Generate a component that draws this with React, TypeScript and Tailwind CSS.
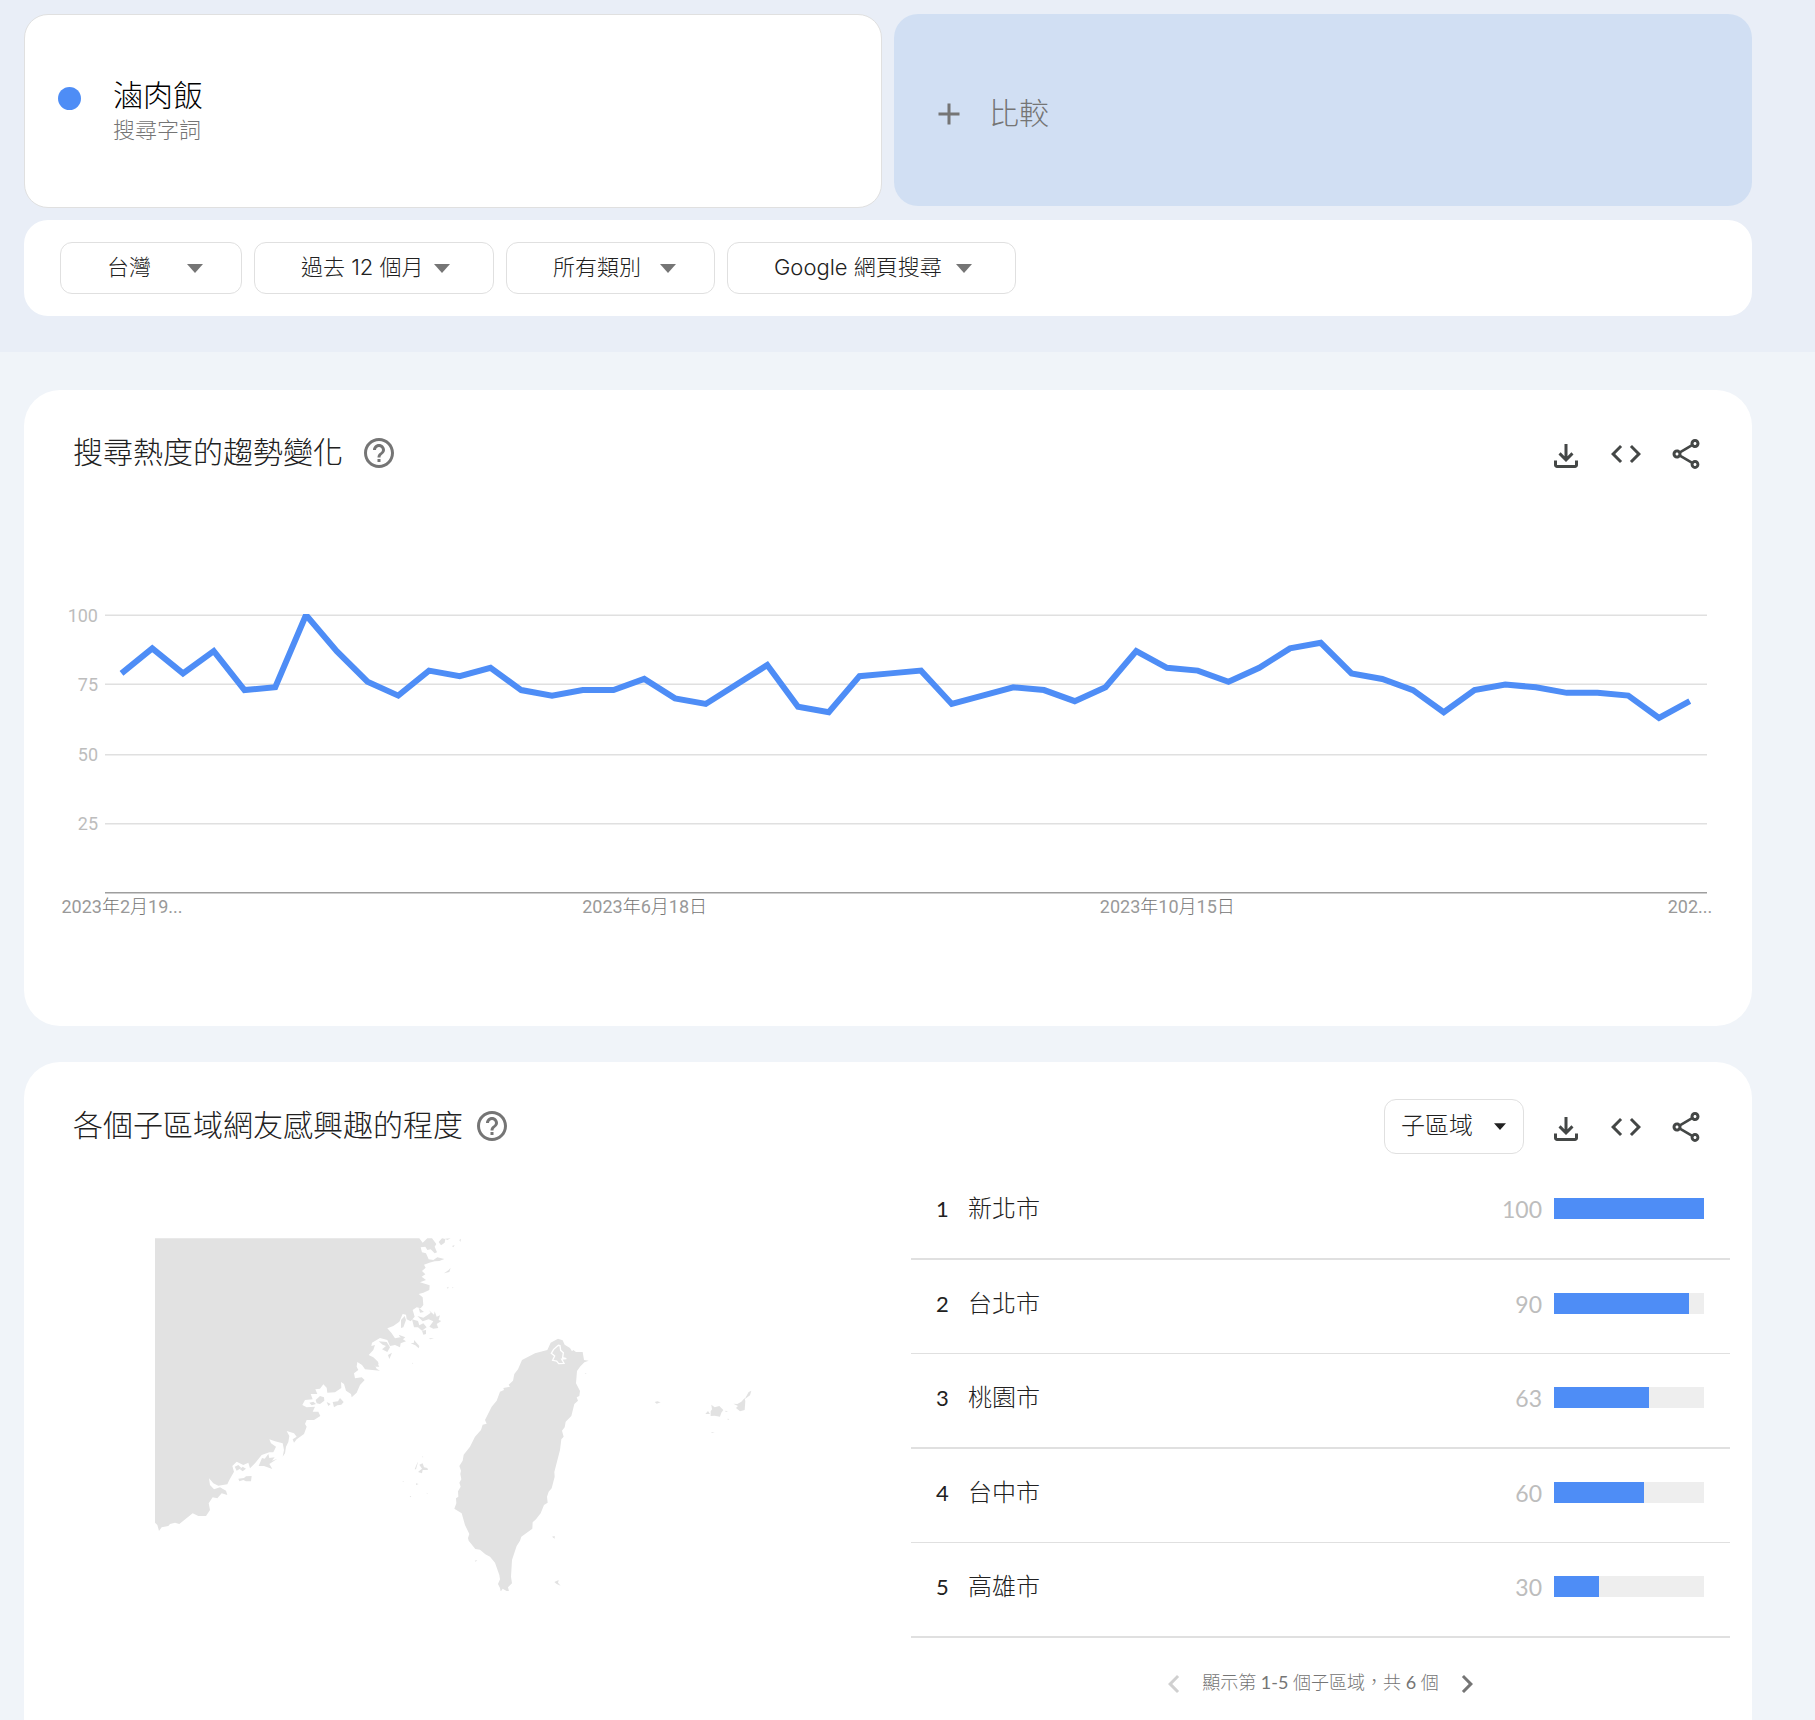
import type { ReactNode } from "react";
import { MdAdd, MdChevronLeft, MdChevronRight, MdCode, MdHelpOutline, MdOutlineShare } from "react-icons/md";

const VALUES = [
  79, 88, 79, 87, 73, 74, 100, 87, 76, 71, 80, 78, 81, 73, 71, 73, 73, 77, 70, 68, 75, 82, 67, 65, 78, 79, 80, 68, 71,
  74, 73, 69, 74, 87, 81, 80, 76, 81, 88, 90, 79, 77, 73, 65, 73, 75, 74, 72, 72, 71, 63, 69,
];

const REGIONS = [
  { name: "新北市", value: 100 },
  { name: "台北市", value: 90 },
  { name: "桃園市", value: 63 },
  { name: "台中市", value: 60 },
  { name: "高雄市", value: 30 },
];

const FILTERS = [
  { label: "地區", text: "台灣", size: "w-[182px]", caret: "right-[39px]" },
  { label: "時間範圍", text: "過去 12 個月", size: "w-[240px]", caret: "right-11" },
  { label: "類別", text: "所有類別", size: "w-[209px]", caret: "right-[39px]" },
  { label: "搜尋類型", text: "Google 網頁搜尋", size: "w-[289px]", caret: "right-11" },
];

function Caret({ className }: { className: string }) {
  return (
    <svg viewBox="0 0 16 9" className={className} fill="currentColor" aria-hidden="true">
      <path d="M0 0H16L8 9Z" />
    </svg>
  );
}

function DownloadIcon() {
  return (
    <svg viewBox="0 0 24 24" className="mt-1 size-9" fill="currentColor" aria-hidden="true">
      <path d="M12 16 7 11l1.4-1.45 2.6 2.6V4h2v8.15l2.6-2.6L17 11ZM6 20q-.825 0-1.412-.587Q4 18.825 4 18v-3h2v3h12v-3h2v3q0 .825-.587 1.413Q18.825 20 18 20Z" />
    </svg>
  );
}

function Actions() {
  return (
    <div className="flex items-center gap-6 text-[#444746]">
      <button type="button" aria-label="下載">
        <DownloadIcon />
      </button>
      <button type="button" aria-label="嵌入">
        <MdCode className="size-9" />
      </button>
      <button type="button" aria-label="分享">
        <MdOutlineShare className="size-9" />
      </button>
    </div>
  );
}

function CardHeader({ title, gap, children }: { title: string; gap: string; children: ReactNode }) {
  return (
    <header className="flex h-[55px] items-center justify-between pr-12 pl-[49px]">
      <div className={`flex items-center pb-[2px] ${gap}`}>
        <h2 className="pb-[3px] text-[30px] leading-9 font-light text-[#212121]">{title}</h2>
        <button type="button" aria-label="說明" className="text-[#757575]">
          <MdHelpOutline className="size-9" />
        </button>
      </div>
      <div className="flex items-center gap-6">{children}</div>
    </header>
  );
}

function TrendChart() {
  const points = VALUES.map((v, i) => `${16.5 + i * 30.75},${279 - v * 2.78}`).join(" ");
  return (
    <div className="pr-[45px] pl-[31px] font-[Roboto,'Noto_Sans_CJK_TC',sans-serif] text-lg leading-[22px]">
      <div className="flex gap-[7px]">
        <div className="grid h-[277px] w-[43px] grid-rows-4 text-right text-[#bdbdbd]">
          {[100, 75, 50, 25].map((n) => (
            <span key={n} className="-mt-[9px]">
              {n}
            </span>
          ))}
        </div>
        <svg viewBox="0 0 1602 280" preserveAspectRatio="none" className="h-[280px] min-w-0 flex-1 overflow-hidden" role="img" aria-label="搜尋熱度折線圖">
          <g fill="#e0e0e0">
            <rect y="0.5" width="1602" height="1.5" />
            <rect y="69.5" width="1602" height="1.5" />
            <rect y="140" width="1602" height="1.5" />
            <rect y="209" width="1602" height="1.5" />
          </g>
          <rect y="278" width="1602" height="1.5" fill="#9e9e9e" />
          <polyline points={points} fill="none" stroke="#4e8df6" strokeWidth="6" vectorEffect="non-scaling-stroke" />
        </svg>
      </div>
      <div className="mr-[17px] ml-[67px] flex justify-between pt-[2px] text-[#999]">
        {["2023年2月19...", "2023年6月18日", "2023年10月15日", "202..."].map((t) => (
          <span key={t} className="flex w-0 justify-center whitespace-nowrap">
            <span>
              {t.split(/([年月日])/).map((part, i) => (
                <span key={i} className={i % 2 ? "font-light text-[#757575]" : "font-normal"}>
                  {part}
                </span>
              ))}
            </span>
          </span>
        ))}
      </div>
    </div>
  );
}

function RegionMap() {
  return (
    <svg viewBox="45 54 1791 1060" className="h-auto w-full" fill="#e2e2e2" role="img" aria-label="子區域地圖">
      <path d="M45 55H838L848 68L862 55H876L889 72L884 80L891 97L884 100L872 88L862 90L856 80L842 82L846 97L858 100L866 118L880 120L892 112L913 117L898 123L884 124L868 128L852 134L857 143L846 153L856 163L845 170L858 180L840 187L869 196L868 210L850 218L836 222L848 232L850 255L842 265L830 262L818 270L824 290L812 304L800 298L798 284L788 282L778 305L760 318L742 325L755 340L765 355L780 352L798 364L782 370L780 382L765 375L750 378L742 360L720 354L696 368L694 378L705 375L700 390L686 405L700 412L714 425L716 433L704 436L710 446L720 452L675 448L666 435L652 426L650 440L655 450L642 460L645 475L665 472L674 480L660 495L650 518L635 532L633 522L618 512L612 492L603 486L604 504L585 517L562 518L560 503L550 493L540 506L526 508L532 522L512 522L518 538L495 540L487 555L500 562L525 560L518 575L535 575L541 588L522 600L500 600L495 612L500 620L492 642L470 658L462 668L458 658L470 650L462 640L440 633L448 648L445 666L438 680L435 700L428 710L432 690L428 670L405 664L388 658L393 670L408 680L400 697L388 697L365 705L345 730L330 745L325 728L310 735L290 725L277 738L282 755L268 780L262 793L235 797L220 790L207 775L210 795L222 808L240 802L258 812L262 825L245 820L232 835L218 832L206 850L210 870L198 888L175 888L158 880L118 912L105 908L90 912L85 918L65 922L57 933L52 915L45 908Z" />
      {/* Coastal islands */}
      <path d="M896 66L906 55L916 57L914 68L903 76ZM936 78L944 75L940 82ZM958 60L963 56L961 66ZM915 56L932 55L922 60ZM912 160L926 150L932 143L928 156ZM920 203L926 200L924 206ZM935 203L940 202L939 205Z" />
      <path d="M836 263L852 276L840 278ZM832 288L850 293L864 284L872 278L867 271L882 284L884 274L890 290L900 286L896 300L904 303L890 312L895 324L880 326L868 320L880 304L866 298L848 304ZM816 298L834 303L838 316L850 310L860 322L846 332L834 322L822 322ZM846 332L858 330L858 342L850 344ZM812 370L822 368L822 360L838 378L836 385L826 376ZM783 300L794 288L798 300L790 322L783 324ZM776 344L796 352L786 360ZM866 355L882 355L872 358Z" />
      <path d="M716 364L740 366L750 382L742 396L726 388L738 378L728 374ZM744 405L756 398L748 417ZM700 440L712 430L718 440ZM816 428L820 430L817 431Z" />
      <path d="M527 540L540 528L552 532L553 542L540 552L530 550ZM560 546L572 552L565 558ZM578 546L594 544L600 534L611 546L604 554L592 556L582 562ZM508 548L520 545L528 552L515 556Z" />
      <path d="M356 738L366 714L374 716L385 702L388 714L404 712L396 722L412 716L388 732L397 747L372 738ZM295 776L312 774L318 769L335 768L333 784L318 784L310 780L298 784ZM284 740L295 735L304 744L290 752ZM300 748L308 740L318 746L308 754Z" />
      {/* Penghu */}
      <path d="M824 748L832 728L834 726L828 748ZM838 734L848 730L852 742L862 744L864 750L848 750L846 760L834 756L846 746ZM848 708L850 712L847 712ZM828 790L836 792L828 795ZM809 828L814 828L811 832ZM860 818L863 820L861 822ZM788 783L792 784L789 786Z" />
      <g transform="translate(780 270)">
        <path d="M474 86L488 91L494 104L510 114L516 124L520 120L528 126L548 126L552 150L566 152L553 157L540 170L531 183L528 220L540 243L538 258L530 262L534 272L523 282L514 318L497 335L494 352L486 362L491 380L484 388L480 420L463 486L464 500L455 535L446 545L441 560L443 578L432 585L422 610L408 628L398 637L397 656L364 680L360 692L350 708L336 750L333 800L336 820L324 832L328 848L308 836L302 845L300 834L294 822L300 808L298 795L285 758L270 740L256 733L240 719L226 717L206 692L204 684L208 672L195 645L185 610L163 596L169 580L168 565L175 560L174 544L182 530L178 518L184 508L181 492L183 482L178 468L188 452L191 434L210 410L225 380L243 360L248 344L260 341L255 330L275 290L290 272L300 245L312 240L310 234L330 230L326 224L339 212L343 192L354 178L366 150L405 130L442 120L452 98Z" />
        <path d="M475 106L461 118L454 130L464 138L458 151L470 153L476 161L492 160L485 147L499 146L488 143L490 128L482 121L480 107Z" fill="none" stroke="#fff" strokeWidth="4" />
        <path d="M764 276L772 274L782 277L770 281ZM916 312L924 303L930 312ZM932 304L936 298L934 284L944 292L958 288L970 300L964 308L960 320L944 317L932 318ZM976 302L984 304L977 306ZM982 326L988 327L984 330ZM1000 281L1012 282L1024 275L1034 264L1036 274L1034 300L1020 304L1008 294L1014 288ZM1034 268L1046 246L1054 242L1050 256ZM932 367L944 367L937 369Z" />
        <path d="M456 680L464 678L464 686ZM463 816L476 810L474 818L482 827L470 822ZM224 752L232 750L227 755ZM554 190L560 190L557 192Z" />
      </g>
    </svg>
  );
}

function RegionList() {
  return (
    <div className="pr-[22px] pl-[23px]">
      <ol>
        {REGIONS.map((r, i) => (
          <li
            key={r.name}
            className={`flex items-center border-[#e0e0e0] pr-[26px] pb-[6px] pl-[25px] ${i % 2 ? "h-[94px] border-b" : "h-[95px] border-b-2"}`}
          >
            <span className="w-8 text-[22px] leading-8 text-[#212121]">{i + 1}</span>
            <span className="flex-1 pb-[2px] text-2xl leading-8 font-light text-[#212121]">{r.name}</span>
            <span className="mr-3 text-[23px] leading-8 text-[#bdbdbd]">{r.value}</span>
            <div className="h-[21px] w-[150px] bg-[#eee]">
              <div className="h-full bg-[#4e8df6]" style={{ width: `${r.value}%` }} />
            </div>
          </li>
        ))}
      </ol>
      <nav aria-label="分頁" className="flex items-center justify-center gap-[10px] pt-7 text-[#757575]">
        <button type="button" aria-label="上一頁" disabled className="text-[#d0d0d0]">
          <MdChevronLeft className="size-9" />
        </button>
        <span className="pb-1 text-lg leading-8">
          <span className="font-light">顯示第</span> 1-5 <span className="font-light">個子區域，共</span> 6 <span className="font-light">個</span>
        </span>
        <button type="button" aria-label="下一頁">
          <MdChevronRight className="size-9" />
        </button>
      </nav>
    </div>
  );
}

export default function App() {
  return (
    <div className="min-h-screen bg-[#f0f4f9] font-[Lato,'Noto_Sans_CJK_TC',sans-serif]">
      <div className="bg-[#e9eef7] pt-[14px] pr-[63px] pb-9 pl-6">
        <div className="grid grid-cols-2 gap-3">
          <section className="flex h-[194px] items-center rounded-3xl border border-[#e0e0e0] bg-white pl-[33px]">
            <span className="mb-[26px] size-[23px] rounded-full bg-[#4e8df6]" />
            <div className="ml-8">
              <h1 className="text-[30px] leading-9 font-light text-black">滷肉飯</h1>
              <p className="pt-[2px] text-[22px] leading-8 font-light text-[#757575]">搜尋字詞</p>
            </div>
          </section>
          <button type="button" className="flex h-48 items-center rounded-3xl bg-[#d1dff3] pt-2 pl-[37px] text-[#757575]">
            <MdAdd className="size-9" />
            <span className="ml-[22px] pb-1 text-[30px] leading-9 font-light">比較</span>
          </button>
        </div>
        <div className="mt-3 flex flex-wrap gap-3 rounded-3xl bg-white px-9 py-[22px]">
          {FILTERS.map((f) => (
            <div key={f.label} className="relative text-[#757575]">
              <select
                aria-label={f.label}
                className={`h-[52px] appearance-none rounded-xl border border-[#e0e0e0] bg-white pb-[2px] pl-[46px] font-[Inter,'Noto_Sans_CJK_TC',sans-serif] text-[22px] font-light text-[#212121] ${f.size}`}
              >
                <option>{f.text}</option>
              </select>
              <Caret className={`pointer-events-none absolute top-[22px] h-[9px] w-4 ${f.caret}`} />
            </div>
          ))}
        </div>
      </div>

      <main className="flex flex-col gap-9 pt-[38px] pr-[63px] pl-6">
        <section className="rounded-[36px] bg-white pt-9 pb-[108px]">
          <CardHeader title="搜尋熱度的趨勢變化" gap="gap-[18px]">
            <Actions />
          </CardHeader>
          <div className="mt-[133px]">
            <TrendChart />
          </div>
        </section>

        <section className="rounded-t-[36px] bg-white pt-[37px] pb-6">
          <CardHeader title="各個子區域網友感興趣的程度" gap="gap-[11px]">
            <div className="relative text-[#212121]">
              <select
                aria-label="區域層級"
                className="h-[55px] w-[140px] appearance-none rounded-xl border border-[#e0e0e0] bg-white pb-1 pl-4 text-2xl font-light"
              >
                <option>子區域</option>
              </select>
              <Caret className="pointer-events-none absolute top-6 right-[18px] h-[7px] w-3" />
            </div>
            <Actions />
          </CardHeader>
          <div className="mt-[11px] grid grid-cols-2">
            <div className="pt-[73px] pr-[136px] pl-[131px]">
              <RegionMap />
            </div>
            <RegionList />
          </div>
        </section>
      </main>
    </div>
  );
}
